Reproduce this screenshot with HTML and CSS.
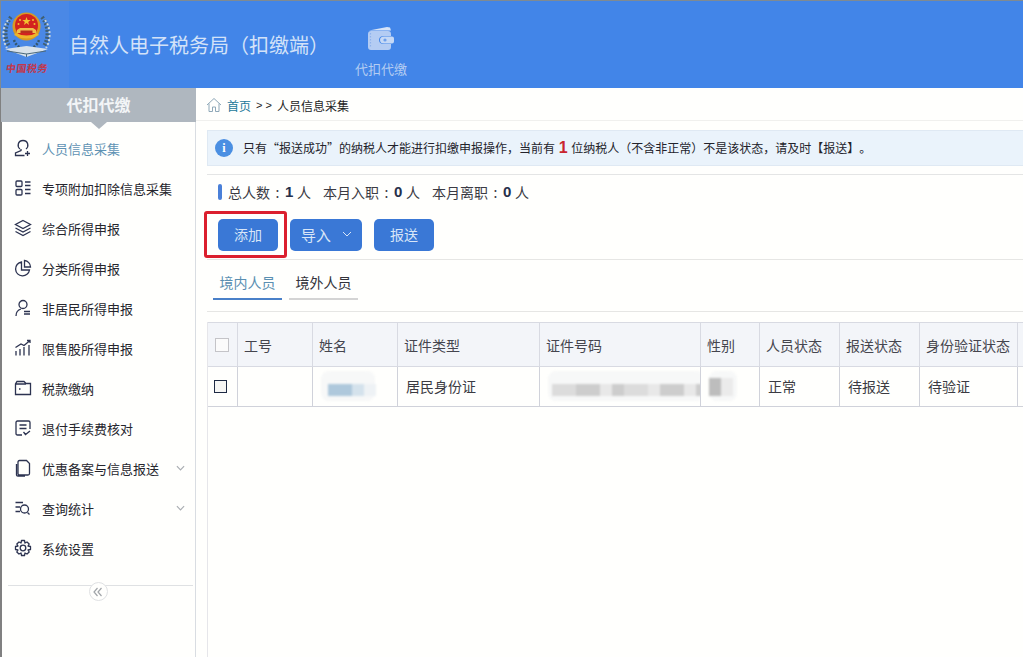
FILE: index.html
```html
<!DOCTYPE html>
<html lang="zh-CN">
<head>
<meta charset="utf-8">
<title>自然人电子税务局（扣缴端）</title>
<link rel="stylesheet" href="styles.css">
</head>
<body>
<div class="app">
  <header class="topbar">
    <div class="logo">
      <svg class="emblem" viewBox="0 0 52 50" width="52" height="50">
        <path class="wreath-d" d="M10 7 C3 16 3 28 8 36 M41 7 C48 16 48 28 43 36"/>
        <path class="wreath-l" d="M7 10 C1 18 1 30 6 38 M44 10 C50 18 50 30 45 38"/>
        <path class="wreath-n" d="M13 30 C15 36 20 39 25.500 40 C31 39 36 36 38 30"/>
        <path d="M4 39 L25.500 36 L47 39 L25.500 47 Z" fill="#d9e2ea"/>
        <path d="M6 41 L25.500 44 L45 41" fill="none" stroke="#4d6a7c" stroke-width="1.200"/>
        <path d="M25.500 44 V47" stroke="#4d6a7c"/>
        <circle cx="25.500" cy="16.500" r="14" fill="#d99a22"/>
        <circle cx="25.500" cy="15.500" r="11.500" fill="#d3231f"/>
        <path d="M25.500 7 l1.100 3 3.100 0 -2.500 1.900 .9 3 -2.600 -1.800 -2.600 1.800 .9 -3 -2.500 -1.900 3.100 0z" fill="#f2c230"/>
        <circle cx="19" cy="10" r="1" fill="#f2c230"/><circle cx="32" cy="10" r="1" fill="#f2c230"/><circle cx="17.500" cy="14" r="1" fill="#f2c230"/><circle cx="33.500" cy="14" r="1" fill="#f2c230"/>
        <path d="M16 23 V20 L19 18 H32 L35 20 V23 Z" fill="#f0c04a"/>
        <path d="M19.500 23 V20.500 H31.500 V23" fill="#b8301e"/>
        <path d="M13 25 Q25.500 32 38 25 L36 23 Q25.500 28 15 23 Z" fill="#efb52a"/>
      </svg>
      <span class="seal-text">中国税务</span>
    </div>
    <h1 class="app-title">自然人电子税务局（扣缴端）</h1>
    <nav class="top-nav">
      <svg class="wallet" viewBox="0 0 30 28" width="30" height="28">
        <path d="M3 4.500 L21 1 L24 1.500 L25 4.500 Z" fill="#d7e4f8"/>
        <path d="M2 8 Q2 5 5 5 H22 Q25 5 25 8 V10 H18 Q13 10 13 14 Q13 18 18 18 H25 V21 Q25 24 22 24 H5 Q2 24 2 21 Z" fill="#b4ccf3"/>
        <path d="M4.500 7 V22" stroke="#8fb2ec" stroke-width="1.200" stroke-dasharray="1.500 1.500"/>
        <path d="M18 10.500 H26 Q28 10.500 28 12.500 V15.500 Q28 17.500 26 17.500 H18 Q14 17.500 14 14 Q14 10.500 18 10.500 Z" fill="#c6d9f6"/>
        <circle cx="19" cy="14" r="1.600" fill="#6e9feb"/>
      </svg>
      <span class="top-nav-label">代扣代缴</span>
    </nav>
  </header>
  <div class="layout">
    <aside class="sidebar">
      <div class="side-title">代扣代缴</div>
      <ul class="menu">
        <li class="menu-item active">
          <svg class="mi" viewBox="0 0 18 18"><path d="M6 10 C3 8 3.500 1.500 9 1.500 C14.500 1.500 15 8 12 10 M7 10 V11.500 L1.500 14 V16.500 H10.500 M13.500 12 V17 M11 14.500 H16"/></svg>
          <span>人员信息采集</span>
        </li>
        <li class="menu-item">
          <svg class="mi" viewBox="0 0 18 18"><rect x="2" y="2" width="6" height="5.500" rx="1"/><rect x="2" y="10.500" width="6" height="5.500" rx="1"/><path d="M11 3 H16.500 M11 6.500 H16.500 M11 10.500 H16.500 M11 14.500 H16.500"/></svg>
          <span>专项附加扣除信息采集</span>
        </li>
        <li class="menu-item">
          <svg class="mi" viewBox="0 0 18 18"><path d="M9 1.500 L16.500 5.500 L9 9.500 L1.500 5.500 Z M1.500 9 L9 13 L16.500 9 M1.500 12.500 L9 16.500 L16.500 12.500"/></svg>
          <span>综合所得申报</span>
        </li>
        <li class="menu-item">
          <svg class="mi" viewBox="0 0 18 18"><path d="M7.500 3 A7 7 0 1 0 15.500 11 H7.500 Z M10.500 1.500 A6.500 6.500 0 0 1 16.500 8 H10.500 Z"/></svg>
          <span>分类所得申报</span>
        </li>
        <li class="menu-item">
          <svg class="mi" viewBox="0 0 18 18"><circle cx="9" cy="5.500" r="4"/><path d="M7 10 C3.500 11 2 13.500 2 17 M10 12.500 H16 M10 15 H16"/></svg>
          <span>非居民所得申报</span>
        </li>
        <li class="menu-item">
          <svg class="mi" viewBox="0 0 18 18"><path d="M2 16.500 V12 M6 16.500 V10 M10 16.500 V8 M15 16.500 V6 M1.500 8.500 L7 5 L10 6.500 L16 1.500 M13 1.500 H16 V4"/></svg>
          <span>限售股所得申报</span>
        </li>
        <li class="menu-item">
          <svg class="mi" viewBox="0 0 18 18"><path d="M1.500 15.500 V5 L3 2.500 H10 L12 4.500 H16.500 V15.500 Z M1.500 5 H12 M5 10 H6.500"/></svg>
          <span>税款缴纳</span>
        </li>
        <li class="menu-item">
          <svg class="mi" viewBox="0 0 18 18"><path d="M8 16 H3.500 Q2 16 2 14.500 V3.500 Q2 2 3.500 2 H14.500 Q16 2 16 3.500 V10 M5.500 6 H12.500 M5.500 9.500 H12.500 M9.500 13 L11.500 15.500 L16 12"/></svg>
          <span>退付手续费核对</span>
        </li>
        <li class="menu-item">
          <svg class="mi" viewBox="0 0 18 18"><path d="M5.500 1.500 H12.500 L15.500 4.500 V14.500 Q15.500 16 14 16 H5.500 Q4 16 4 14.500 V3 Q4 1.500 5.500 1.500 Z M2.500 5 V16 Q2.500 17 4 17 H11"/></svg>
          <span>优惠备案与信息报送</span>
          <svg class="chev" viewBox="0 0 10 6"><path d="M1 1 L5 5 L9 1"/></svg>
        </li>
        <li class="menu-item">
          <svg class="mi" viewBox="0 0 18 18"><path d="M1.500 3.500 H9 M1.500 8 H6 M1.500 12.500 H6 M15.500 15.500 L13.500 13.500"/><circle cx="10.500" cy="10" r="4"/></svg>
          <span>查询统计</span>
          <svg class="chev" viewBox="0 0 10 6"><path d="M1 1 L5 5 L9 1"/></svg>
        </li>
        <li class="menu-item">
          <svg class="mi" viewBox="0 0 18 18"><circle cx="9" cy="9" r="2.800"/><path d="M7.500 1.500 H10.500 L11 4 L13 3 L15.200 5 L14 7 L16.500 7.500 V10.500 L14 11 L15.200 13 L13 15 L11 14 L10.500 16.500 H7.500 L7 14 L5 15 L2.800 13 L4 11 L1.500 10.500 V7.500 L4 7 L2.800 5 L5 3 L7 4 Z" stroke-linejoin="round"/></svg>
          <span>系统设置</span>
        </li>
      </ul>
      <div class="collapse">
        <span class="collapse-btn">
          <svg viewBox="0 0 10 10" width="10" height="10"><path d="M4.500 1 L1 5 L4.500 9 M8.500 1 L5 5 L8.500 9"/></svg>
        </span>
      </div>
    </aside>
    <main class="content">
      <div class="crumbs">
        <svg class="home" viewBox="0 0 16 16" width="16" height="16"><path d="M1 8 L8 1.500 L15 8 M3 6.500 V14.500 H6.500 V10 H9.500 V14.500 H13 V6.500"/></svg>
        <a class="crumb-link">首页</a>
        <span class="crumb-sep">&gt; &gt;</span>
        <span class="crumb-now">人员信息采集</span>
      </div>
      <div class="notice">
        <span class="info-dot">i</span>
        <span class="notice-text">只有“报送成功”的纳税人才能进行扣缴申报操作，当前有 <b class="red">1</b> 位纳税人（不含非正常）不是该状态，请及时【报送】。</span>
      </div>
      <section class="panel">
        <div class="stats">
          <span class="stats-bar"></span>
          <span class="stat">总人数<span class="colon">:</span><b>1</b><span class="unit">人</span></span>
          <span class="stat">本月入职<span class="colon">:</span><b>0</b><span class="unit">人</span></span>
          <span class="stat">本月离职<span class="colon">:</span><b>0</b><span class="unit">人</span></span>
        </div>
        <div class="actions">
          <span class="btn-wrap"><button class="btn">添加</button><span class="hilite"></span></span>
          <button class="btn btn-drop">导入<svg viewBox="0 0 10 6" width="10" height="6"><path d="M1 1 L5 5 L9 1"/></svg></button>
          <button class="btn">报送</button>
        </div>
        <div class="tabs">
          <span class="tab on">境内人员</span>
          <span class="tab">境外人员</span>
        </div>
        <div class="table-zone">
          <table class="grid">
            <colgroup>
              <col class="c1"><col class="c2"><col class="c3"><col class="c4"><col class="c5"><col class="c6"><col class="c7"><col class="c8"><col class="c9"><col class="c10">
            </colgroup>
            <thead>
              <tr>
                <th class="chk-cell head"><span class="chk chk-head"></span></th>
                <th>工号</th><th>姓名</th><th>证件类型</th><th>证件号码</th><th>性别</th><th>人员状态</th><th>报送状态</th><th>身份验证状态</th><th></th>
              </tr>
            </thead>
            <tbody>
              <tr>
                <td class="chk-cell"><span class="chk"></span></td>
                <td></td>
                <td><span class="mask mask-name"><i class="mb b1"></i><i class="mb b2"></i><i class="mb b3"></i></span></td>
                <td>居民身份证</td>
                <td><span class="mask mask-id"><i class="mg g1"></i><i class="mg g2"></i><i class="mg g3 n"></i><i class="mg g2 n"></i><i class="mg g1"></i><i class="mg g3"></i><i class="mg g2"></i><i class="mg g3"></i><i class="mg g2 w"></i><i class="mg g3"></i></span></td>
                <td><span class="mask mask-sex"><i class="mg g4"></i><i class="mg g5"></i></span></td>
                <td>正常</td><td>待报送</td><td>待验证</td><td></td>
              </tr>
            </tbody>
          </table>
        </div>
      </section>
    </main>
  </div>
</div>
</body>
</html>
```
FILE: styles.css
```css
* { box-sizing: border-box; }
html, body { margin: 0; padding: 0; }
body {
  width: 1023px;
  height: 657px;
  overflow: hidden;
  background: #fffffd;
  font-family: "Noto Sans CJK SC", "Liberation Sans", sans-serif;
  color: #2b2b33;
  text-spacing-trim: space-all;
}
.app { display: flex; flex-direction: column; height: 657px; }

.topbar {
  height: 88px;
  flex: none;
  display: flex;
  align-items: flex-start;
  background: #4285e8;
  border-top: 1px solid #7f8a92;
  border-left: 1px solid #7f8a92;
}
.logo {
  width: 68px;
  height: 87px;
  flex: none;
  display: flex;
  flex-direction: column;
  align-items: flex-start;
  padding: 9px 0 0;
  background: #4a88e6;
}
.emblem { display: block; flex: none; }
.wreath-d, .wreath-l, .wreath-n { fill: none; }
.wreath-d { stroke: #3f5f74; stroke-width: 4; stroke-dasharray: 2 1.500; }
.wreath-l { stroke: #c9d6e0; stroke-width: 2; stroke-dasharray: 2 2; }
.wreath-n { stroke: #35566c; stroke-width: 2.500; stroke-dasharray: 2 1.500; }
.seal-text {
  font-size: 10px;
  line-height: 12px;
  margin: 2px 0 0 5px;
  letter-spacing: .5px;
  color: #c3364a;
  font-weight: 700;
  white-space: nowrap;
  transform: skewX(-8deg);
}
.app-title {
  margin: 28px 0 0;
  width: 265px;
  flex: none;
  font-size: 20px;
  line-height: 32px;
  font-weight: 400;
  color: #d3e2f8;
  white-space: nowrap;
}
.top-nav {
  width: 94px;
  display: flex;
  flex-direction: column;
  align-items: center;
  padding-top: 25px;
  flex: none;
}
.wallet { display: block; }
.top-nav-label { margin-top: 6px; font-size: 13px; line-height: 18px; color: #b5cdf2; }

.layout { flex: 1; display: flex; min-height: 0; }

.sidebar {
  width: 196px;
  flex: none;
  border-left: 2px solid #808080;
  border-right: 1px solid #d9dde2;
  display: flex;
  flex-direction: column;
}
.side-title {
  position: relative;
  height: 34px;
  margin-left: -1px;
  margin-right: -1px;
  background: #afb7bf;
  color: #f3f5f7;
  font-size: 16px;
  font-weight: 700;
  line-height: 33px;
  text-align: center;
  flex: none;
}
.side-title::after {
  content: "";
  position: absolute;
  left: 90px;
  bottom: -7px;
  border-left: 8px solid transparent;
  border-right: 8px solid transparent;
  border-top: 7px solid #afb7bf;
}
.menu { list-style: none; margin: 6px 0 0; padding: 0; }
.menu-item {
  height: 40px;
  display: flex;
  align-items: center;
  padding-left: 12px;
  font-size: 13px;
  color: #26262e;
}
.menu-item.active { color: #5f93b4; }
.mi {
  width: 18px;
  height: 18px;
  margin-right: 10px;
  flex: none;
  fill: none;
  stroke: #2c3350;
  stroke-width: 1.300;
}
.chev {
  width: 9px;
  height: 6px;
  margin-left: auto;
  margin-right: 10px;
  fill: none;
  stroke: #a9adb2;
  stroke-width: 1.300;
}
.collapse {
  margin: 17px 2px 0 6px;
  border-top: 1px solid #dfe1e3;
  display: flex;
  justify-content: center;
}
.collapse-btn {
  margin-top: -4px;
  margin-left: -5px;
  width: 19px;
  height: 19px;
  border: 1px solid #dfe1e3;
  border-radius: 50%;
  background: #fffffd;
  display: flex;
  align-items: center;
  justify-content: center;
}
.collapse-btn svg { fill: none; stroke: #a0a4a8; stroke-width: 1.200; }

.content { flex: 1; min-width: 0; display: flex; flex-direction: column; }
.crumbs {
  height: 33px;
  flex: none;
  display: flex;
  align-items: center;
  padding: 2px 0 0 10px;
  font-size: 12px;
  border-bottom: 1px solid #f0f0ee;
}
.home { fill: none; stroke: #8fa8b8; stroke-width: 1; margin-right: 5px; }
.crumb-link { color: #22789a; }
.crumb-sep { margin: 0 5px; font-family: "Liberation Sans", sans-serif; font-size: 11px; color: #222; }
.crumb-now { color: #1d1d1d; }

.notice {
  margin: 9px 0 0 11px;
  height: 36px;
  flex: none;
  display: flex;
  align-items: center;
  padding-left: 7px;
  background: #eaf3fb;
  border: 1px solid #dfe9f3;
  border-right: 0;
  font-size: 12px;
  white-space: nowrap;
  color: #23232b;
}
.info-dot {
  width: 18px;
  height: 18px;
  margin-right: 10px;
  flex: none;
  border-radius: 50%;
  background: #4a8fe2;
  color: #fff;
  font: 700 12px/18px "Liberation Serif", serif;
  text-align: center;
}
.red { margin: 0 1px; color: #c9252e; font: 700 16px/18px "Liberation Sans", sans-serif; }

.panel { margin: 8px 0 0 11px; flex: 1; min-height: 0; border-top: 1px solid #e4e5e5; display: flex; flex-direction: column; }
.stats { height: 35px; flex: none; display: flex; align-items: center; font-size: 14px; padding: 0 0 2px 11px; color: #3b3b44; }
.stats-bar { width: 4px; height: 16px; border-radius: 2px; background: #4a80d8; margin-right: 6px; flex: none; }
.stat { margin-right: 12px; white-space: nowrap; display: flex; align-items: center; }
.colon { width: 15px; text-align: center; }
.stat b { width: 8px; font: 700 15px/18px "Liberation Sans", sans-serif; color: #27304a; }
.unit { margin-left: 4px; }

.actions { height: 50px; flex: none; display: flex; align-items: flex-start; gap: 12px; padding: 9px 0 0 11px; border-bottom: 1px solid #e6e6e4; }
.btn-wrap { position: relative; display: block; height: 32px; }
.btn {
  height: 32px;
  width: 60px;
  border: 0;
  padding: 0 0 2px;
  border-radius: 5px;
  background: #3a78d6;
  color: #d8e6f8;
  font: 14px "Noto Sans CJK SC", sans-serif;
  display: block;
}
.btn-drop { width: 72px; display: flex; align-items: center; justify-content: flex-start; padding-left: 11px; font-size: 15px; }
.btn-drop svg { margin-left: 11px; fill: none; stroke: #d8e6f8; stroke-width: 1; }
.hilite {
  position: absolute;
  left: -14px;
  top: -8px;
  width: 83px;
  height: 47px;
  border: 3px solid #db1f2e;
  border-radius: 3px;
}
.tabs { height: 52px; flex: none; display: flex; gap: 7px; padding: 10px 0 0 6px; align-items: flex-start; border-bottom: 1px solid #e6e6e4; }
.tab { height: 30px; width: 69px; text-align: center; font-size: 14px; line-height: 25px; color: #33333a; border-bottom: 2px solid #d4d4d4; }
.tab.on { color: #5b8fb2; border-bottom-color: #4a80c8; }

.table-zone { flex: 1; min-height: 0; margin-top: 10px; border-left: 1px solid #e6e6ea; overflow: hidden; }
.grid { border-collapse: collapse; table-layout: fixed; width: 816px; margin-left: -1px; font-size: 14px; }
.c1 { width: 30px; } .c2 { width: 75px; } .c3 { width: 85px; } .c4 { width: 142px; } .c5 { width: 161px; }
.c6 { width: 59px; } .c7 { width: 80px; } .c8 { width: 80px; } .c9 { width: 98px; } .c10 { width: 6px; }
.grid th {
  height: 44px;
  padding: 0 0 0 6px;
  background: #f3f5f9;
  border: 1px solid #d8dae2;
  font-weight: 400;
  text-align: left;
  color: #45454e;
  white-space: nowrap;
  overflow: hidden;
}
.grid td {
  height: 40px;
  padding: 0 0 2px 8px;
  border: 1px solid #d0d2da;
  color: #3b3b42;
  white-space: nowrap;
  overflow: hidden;
}
.grid .chk-cell { padding: 0 0 0 6px; }
.grid .chk-cell.head { padding-left: 7px; }
.chk { display: block; width: 13px; height: 13px; border: 1.500px solid #1e2a44; background: #f6f6f4; }
.chk-head { width: 14px; height: 14px; border: 1px solid #c4c4c8; background: #fbfbfb; }

.mask { display: flex; align-items: flex-end; height: 30px; padding-bottom: 5px; filter: blur(.8px); background: #f7f8f8; border-radius: 8px; }
.mask-name { width: 54px; padding-left: 7px; }
.mask-id { width: 156px; padding-left: 4px; }
.mask-sex { width: 28px; }
.mb, .mg { display: block; height: 12px; flex: none; }
.b1 { width: 24px; background: #aec8dc; }
.b2 { width: 12px; background: #d4e2ec; }
.b3 { width: 12px; background: #eef2f5; }
.mg { width: 12px; }
.mg.n { width: 12px; }
.mg.w { width: 24px; }
.g1 { width: 24px; background: #dcdcdc; }
.g2 { width: 24px; background: #cdcdcd; }
.g3 { width: 12px; background: #e8e8e8; }
.g4 { height: 18px; background: #bdbdbd; }
.g5 { height: 18px; background: #ebebeb; }
```
